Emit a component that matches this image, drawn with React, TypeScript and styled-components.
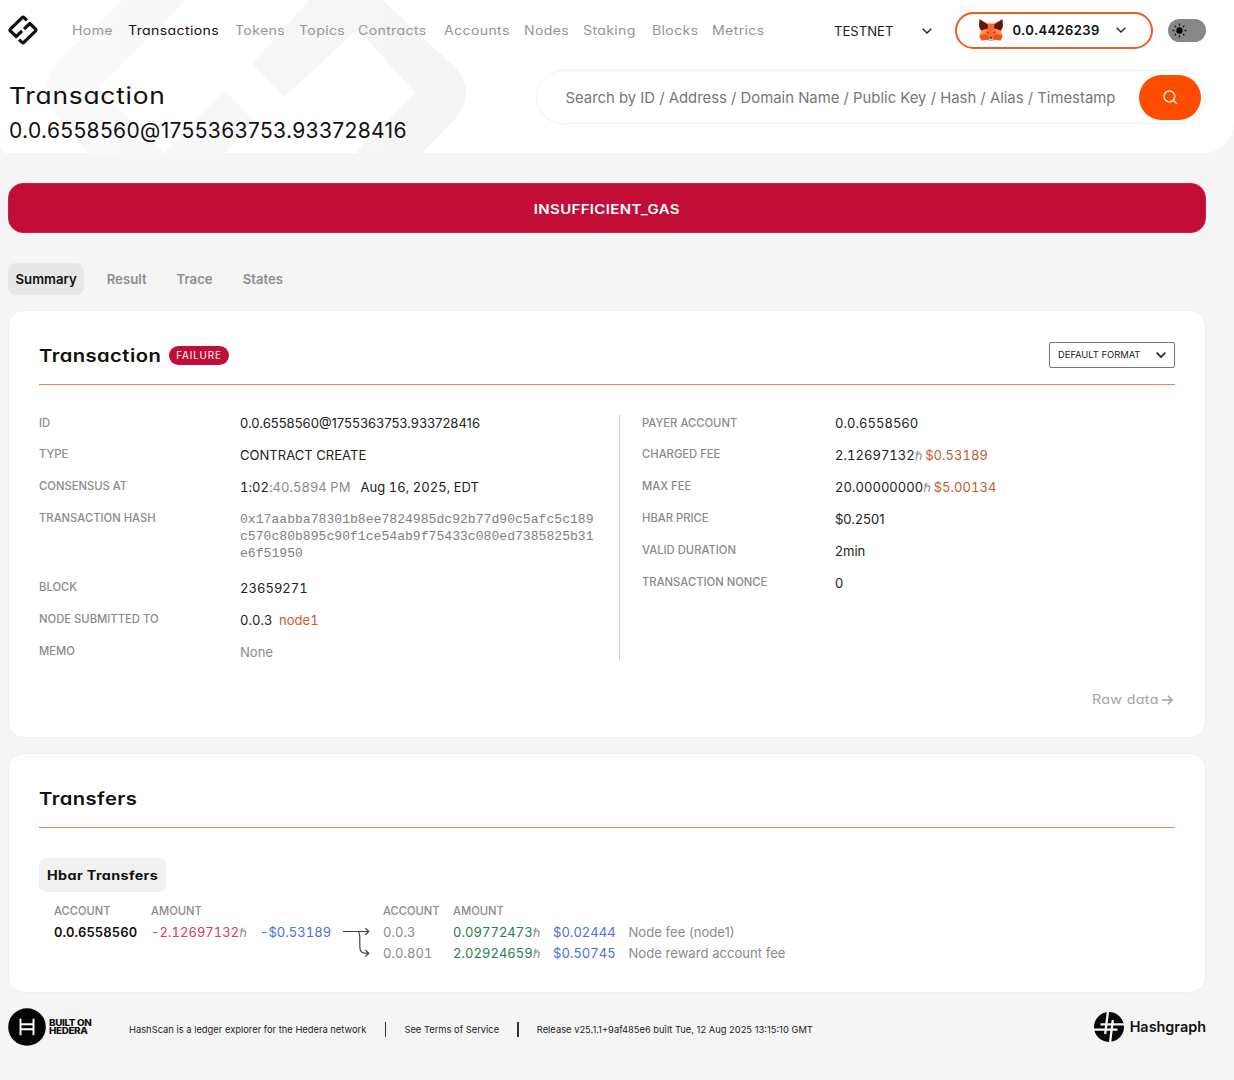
import React from "react";
import styled, { createGlobalStyle } from "styled-components";

const GlobalStyle = createGlobalStyle`
  * { box-sizing: border-box; }
  body {
    margin: 0;
    background: #f5f5f5;
    color: #222;
    font-family: Inter, "Liberation Sans", sans-serif;
    font-size: 13px;
    -webkit-font-smoothing: antialiased;
  }
`;

const brandFont = `
  font-family: Inter, "Liberation Sans", sans-serif;
  font-feature-settings: "cv11", "ss03";
`;

/* The brand face is wide: Inter's letters are stretched from their left edge. */
const wide = (k: number) => `
  transform: scaleX(${k});
  transform-origin: 0 50%;
`;

const Page = styled.div`
  width: 1234px;
  height: 1080px;
  overflow: hidden;
`;

const Header = styled.header`
  position: relative;
  height: 153px;
  overflow: hidden;
  background: #fff;
  border-radius: 0 0 30px 6px;
`;

const Watermark = styled.svg`
  position: absolute;
  inset: 0;
  width: 500px;
  height: 154px;
`;

const TopBar = styled.div`
  position: relative;
  display: flex;
  align-items: center;
  height: 60px;
  padding: 0 28px 0 8px;
`;

const Nav = styled.nav`
  display: flex;
  flex: 1;
  gap: 15.4px;
  margin-left: 34px;
  padding-top: 2px;
`;

const NavLink = styled.a<{ $w: number; $active?: boolean }>`
  ${brandFont}
  ${wide(1.14)}
  width: ${(p) => p.$w}px;
  font-size: 12.4px;
  line-height: 18px;
  letter-spacing: 0.3px;
  white-space: nowrap;
  color: ${(p) => (p.$active ? "#111" : "#959595")};
`;

const Network = styled.div`
  display: flex;
  align-items: center;
  justify-content: space-between;
  width: 98px;
  margin-right: 23px;
  padding-top: 1px;
  font-size: 13.1px;
  color: #222;
`;

const Wallet = styled.div`
  ${brandFont}
  display: flex;
  align-items: center;
  width: 198px;
  height: 37px;
  margin-right: 15px;
  padding: 0 25px 0 22px;
  border: 2px solid #ee5c26;
  border-radius: 19px;
  font-size: 13px;
  font-weight: 600;
  letter-spacing: 0.4px;
  color: #111;
`;

const WalletId = styled.span`
  flex: 1;
  margin-left: 9.5px;
`;

const Toggle = styled.div`
  display: flex;
  align-items: center;
  width: 38px;
  height: 23px;
  padding-left: 4px;
  border-radius: 12px;
  background: #878787;
`;

const HeaderMain = styled.div`
  position: relative;
  display: flex;
  justify-content: space-between;
  padding: 10px 28px 0 9px;
`;

const PageTitle = styled.h1`
  ${brandFont}
  ${wide(1.12)}
  width: 160px;
  margin: 9px 0 0;
  font-size: 23.5px;
  line-height: 34px;
  font-weight: 400;
  letter-spacing: 0.7px;
  color: #111;
`;

const PageSubtitle = styled.div`
  ${brandFont}
  font-size: 21px;
  line-height: 35px;
  letter-spacing: 0.36px;
  color: #111;
`;

const SearchBox = styled.div`
  display: flex;
  align-items: center;
  justify-content: space-between;
  width: 670px;
  height: 54px;
  padding: 0 4px 0 28.5px;
  border: 1px solid #f0f0f0;
  border-radius: 27px;
  background: #fff;
  font-size: 14.87px;
  color: #777;
`;

const SearchHint = styled.span`
  padding-top: 2px;
`;

const SearchButton = styled.button`
  display: flex;
  align-items: center;
  justify-content: center;
  width: 62px;
  height: 45px;
  border: 0;
  border-radius: 22.5px;
  background: #ff4d00;
`;

const Main = styled.main`
  display: flex;
  flex-direction: column;
  padding: 30px 28px 0 8px;
`;

const Alert = styled.div`
  ${brandFont}
  display: flex;
  align-items: center;
  justify-content: center;
  height: 50px;
  border: 1px solid #cf1f49;
  border-radius: 15px;
  background: #c20e37;
  color: #fff;
  font-size: 12.7px;
  font-weight: 600;
  letter-spacing: 0.3px;
  padding-top: 2px;
`;

const AlertText = styled.span`
  transform: scaleX(1.18);
`;

const Tabs = styled.div`
  display: flex;
  gap: 15px;
  margin-top: 30px;
`;

const Tab = styled.div<{ $active?: boolean }>`
  height: 32px;
  padding: 0 7.5px;
  border-radius: 8px;
  background: ${(p) => (p.$active ? "#e8e8e8" : "transparent")};
  color: ${(p) => (p.$active ? "#111" : "#8e8e8e")};
  font-size: 13.2px;
  line-height: 32px;
  font-weight: 600;
`;

const Card = styled.section<{ $h: number; $top: number }>`
  display: flex;
  flex-direction: column;
  height: ${(p) => p.$h}px;
  margin-top: ${(p) => p.$top}px;
  padding: 0 30px;
  border: 1px solid #f0f0f0;
  border-radius: 16px;
  background: #fff;
`;

const CardHeader = styled.div`
  display: flex;
  flex-shrink: 0;
  align-items: center;
  height: 74px;
  padding-top: 17px;
  border-bottom: 1px solid #ee7f5c;
`;

const CardTitle = styled.h2`
  ${brandFont}
  ${wide(1.16)}
  width: 122px;
  margin: 0;
  font-size: 17.4px;
  line-height: 26px;
  font-weight: 600;
  letter-spacing: 0.4px;
  color: #111;
`;

const Badge = styled.span`
  ${brandFont}
  width: 60px;
  height: 19px;
  margin: -1px 0 0 8px;
  border-radius: 10px;
  background: #c20e37;
  color: #fff;
  font-size: 9.8px;
  line-height: 19px;
  text-align: center;
  letter-spacing: 0.9px;
`;

const Select = styled.div`
  display: flex;
  align-items: center;
  justify-content: space-between;
  width: 126px;
  height: 26px;
  margin: -3px 0 0 auto;
  padding: 0 8px 0 8px;
  border: 1px solid #777;
  border-radius: 2px;
  font-size: 9.4px;
  color: #222;
`;

const Details = styled.div`
  display: flex;
  flex-shrink: 0;
  height: 245px;
  margin-top: 30px;
`;

const Column = styled.div<{ $w?: number }>`
  display: flex;
  flex-direction: column;
  width: ${(p) => (p.$w ? `${p.$w}px` : "auto")};
`;

const VerticalRule = styled.div`
  width: 1px;
  margin-right: 22px;
  background: #d2d2d2;
`;

const Property = styled.div<{ $label: number; $tall?: boolean }>`
  display: grid;
  flex-shrink: 0;
  grid-template-columns: ${(p) => p.$label}px auto;
  height: ${(p) => (p.$tall ? 69.2 : 31.9)}px;
`;

const Label = styled.div`
  padding-top: 0.6px;
  font-size: 11.25px;
  line-height: 14px;
  font-weight: 500;
  color: #8b8b8b;
`;

const Value = styled.div<{ $tone?: "muted" }>`
  padding-top: 0.3px;
  font-size: 13.05px;
  line-height: 17px;
  white-space: pre;
  color: ${(p) => (p.$tone ? "#8b8b8b" : "#222")};
`;

const Hash = styled.div`
  width: 360px;
  font-family: "Liberation Mono", monospace;
  font-size: 13.1px;
  line-height: 17px;
  word-break: break-all;
  color: #808080;
`;

type Tone = "dark" | "bold" | "muted" | "orange" | "red" | "green" | "blue";
const tones: Record<Tone, string> = {
  dark: "#222",
  bold: "#111",
  muted: "#8b8b8b",
  orange: "#cb5a30",
  red: "#dc3b5f",
  green: "#258046",
  blue: "#4a70dd",
};

const Num = styled.span<{ $tone?: Tone }>`
  font-size: 13px;
  letter-spacing: 0.04px;
  font-feature-settings: "tnum";
  font-weight: ${(p) => (p.$tone === "bold" ? 600 : 400)};
  color: ${(p) => tones[p.$tone ?? "dark"]};
`;

const DateText = styled(Num)`
  margin-left: 10px;
`;

const NodeName = styled(Num)`
  margin-left: 6.5px;
`;

const HbarSign = styled.span`
  font-family: "DejaVu Sans", sans-serif;
  font-size: 12px;
  line-height: 1;
  letter-spacing: -0.9px;
  color: #888;
`;

const RawData = styled.div`
  display: flex;
  align-items: center;
  align-self: flex-end;
  gap: 3px;
  margin-top: 30px;
  padding-right: 2px;
  color: #a3a3a3;
`;

const RawDataText = styled.span`
  ${brandFont}
  ${wide(1.14)}
  width: 67px;
  font-size: 12.5px;
  line-height: 20px;
  letter-spacing: 0.3px;
  white-space: nowrap;
`;

const Chip = styled.div`
  align-self: flex-start;
  width: 127px;
  height: 34px;
  margin-top: 30px;
  padding-left: 8px;
  border-radius: 7px;
  background: #f1f1f1;
`;

const ChipText = styled.div`
  ${brandFont}
  ${wide(1.15)}
  font-size: 12.5px;
  line-height: 36px;
  font-weight: 700;
  letter-spacing: 0.3px;
  white-space: nowrap;
  color: #111;
`;

const TransferTable = styled.div`
  display: grid;
  grid-template-columns: 97px 109px 83px 40px 70px 100px 75.5px auto;
  grid-template-rows: 21px 21.5px 21.5px;
  align-items: center;
  margin: 8px 0 0 15px;
  font-size: 13.1px;
  white-space: nowrap;
  color: #8b8b8b;
`;

const ColumnHead = styled.div<{ $col: number }>`
  grid-row: 1;
  grid-column: ${(p) => p.$col};
  padding-top: 1px;
  font-size: 11.2px;
  font-weight: 500;
`;

const Cell = styled.div<{ $row: number; $col: number }>`
  grid-row: ${(p) => p.$row};
  grid-column: ${(p) => p.$col};
`;

const ArrowCell = styled.div`
  grid-row: 2 / 4;
  grid-column: 4;
  height: 43px;
`;

const Footer = styled.footer`
  display: flex;
  align-items: center;
  height: 38px;
  margin-top: 15px;
  font-size: 9.36px;
  color: #222;
`;

const BuiltOn = styled.div`
  ${wide(1.13)}
  width: 80px;
  margin-left: 3px;
  font-size: 8.7px;
  line-height: 8px;
  font-weight: 800;
  letter-spacing: -0.3px;
  color: #111;
`;

const BuiltOnLine = styled.div`
  height: 8px;
`;

const FooterText = styled.span<{ $w: number }>`
  width: ${(p) => p.$w}px;
  padding-top: 5px;
  white-space: nowrap;
`;

const FooterRule = styled.span`
  width: 1.4px;
  height: 15px;
  margin: 5px 18px 0;
  background: #333;
`;

const Hashgraph = styled.div`
  display: flex;
  align-items: center;
  gap: 6px;
  margin-left: auto;
  font-size: 14.4px;
  font-weight: 600;
  color: #111;
`;

const HashgraphName = styled.span`
  margin-top: -2px;
`;

const LogoMark = () => (
  <svg width="30" height="30" viewBox="0 0 30 30" fill="none" stroke="#111" strokeWidth="3.2" strokeLinejoin="round">
    <path d="M18.9 5.3 16.3 2.8Q15.1 1.6 13.9 2.8L2.6 13.8Q1.4 15 2.6 16.2L8.2 21.5 14 15.9" />
    <path d="M11.1 24.7 13.7 27.2Q14.9 28.4 16.1 27.2L27.4 16.2Q28.6 15 27.4 13.8L21.8 8.5 16 14.1" />
  </svg>
);

const WatermarkMark = () => (
  <Watermark viewBox="0 0 500 154">
    <defs>
      <linearGradient id="mark-fade" x1="50" x2="466" y1="0" y2="0" gradientUnits="userSpaceOnUse">
        <stop offset="0" stopColor="#fafafa" />
        <stop offset="1" stopColor="#f4f4f4" />
      </linearGradient>
    </defs>
    <g fill="url(#mark-fade)">
      <path d="M126 -3 59 60Q36 85 56 115L89 154H163L225 91L253 120L224 154H165L98 88L188 -3Z" />
      <path d="M312 -3 252 64 284 97 358 29 415 93 355 154H421L455 119Q477 94 455 67L379 -3Z" />
    </g>
  </Watermark>
);

const Chevron = ({ size = 10, weight = 1.4 }: { size?: number; weight?: number }) => (
  <svg width={size} height={size * 0.6} viewBox="0 0 10 6" fill="none" stroke="#222" strokeWidth={weight}>
    <path d="M.7.7 5 5 9.3.7" />
  </svg>
);

const Fox = () => (
  <svg width="24" height="22" viewBox="0 0 24 22">
    <path fill="#ff6a2c" d="M.6.3 8.8 4.6H15.2L23.4.3 24 8 21.8 13 23.5 18 21.5 21.5 16 20 14 21.8H10L8 20 2.5 21.5.5 18 2.2 13 0 8Z" />
    <path fill="#5c1a05" d="M.6.3 8.6 5.4 9 9.4 2.2 11.4.2 7ZM23.4.3 15.4 5.4 15 9.4 21.8 11.4 23.8 7Z" />
    <path fill="#ff8d5d" d="M9 9.4 6.2 15.2.5 16.2 2.3 11.4ZM15 9.4 17.8 15.2 23.5 16.2 21.7 11.4Z" />
    <path fill="#f0541a" d="M6.2 15.2 10.3 17.2 10 20.5 2.5 21.5.5 16.2ZM17.8 15.2 13.7 17.2 14 20.5 21.5 21.5 23.5 16.2Z" />
    <path fill="#7d2a0c" d="M7.2 12.4 9.8 13.4 9.2 14.5ZM16.8 12.4 14.2 13.4 14.8 14.5Z" />
    <path fill="#c9c4cc" d="M10.3 18H13.7L14.2 21.5H9.8Z" />
    <path fill="#3a2420" d="M10.9 18H13.1L13.4 19.6H10.6Z" />
  </svg>
);

const Sun = () => (
  <svg width="15" height="15" viewBox="0 0 15 15">
    <circle cx="7.5" cy="7.5" r="3.2" fill="#000" />
    <g stroke="#111" strokeWidth="1.3">
      <path d="M7.5 .5V2.5M7.5 12.5V14.5M.5 7.5H2.5M12.5 7.5H14.5M2.6 2.6 4 4M11 11 12.4 12.4M2.6 12.4 4 11M11 4 12.4 2.6" />
    </g>
  </svg>
);

const SearchGlyph = () => (
  <svg width="16" height="16" viewBox="0 0 16 16" fill="none" stroke="#fff" strokeWidth="1.3" strokeLinecap="round">
    <circle cx="7.4" cy="7.4" r="5.4" />
    <path d="M11.4 11.4 14.6 14.6" />
  </svg>
);

const TransferArrow = () => (
  <svg width="28" height="43" viewBox="0 0 28 43" fill="none" stroke="#444" strokeWidth="1.2">
    <path d="M0 10.5H25.5M22.3 7.2 25.8 10.5 22.3 13.8" />
    <path d="M15.3 10.5Q16.8 12.5 16.8 16.5V25.5Q16.8 32.2 22 32.2H25.5M22.3 28.9 25.8 32.2 22.3 35.5" />
  </svg>
);

const HederaMark = () => (
  <svg width="38" height="38" viewBox="0 0 38 38">
    <circle cx="19" cy="19" r="18.8" fill="#050505" />
    <path d="M12.5 10.8V27.2M25.5 10.8V27.2M12.5 16.3H25.5M12.5 21.3H25.5" fill="none" stroke="#fff" strokeWidth="1.9" />
  </svg>
);

const HashgraphMark = () => (
  <svg width="30" height="30" viewBox="0 0 30 30">
    <circle cx="15" cy="15" r="15" fill="#080808" />
    <g fill="none" stroke="#f5f5f5" strokeWidth="2.3">
      <path d="M14 -1 11.2 22M16 31 18.8 8M31 12.4H6.5M-1 17.6H23.5" />
    </g>
  </svg>
);

const navItems = [
  { label: "Home", w: 41 },
  { label: "Transactions", w: 91 },
  { label: "Tokens", w: 48.5 },
  { label: "Topics", w: 44 },
  { label: "Contracts", w: 71 },
  { label: "Accounts", w: 64.5 },
  { label: "Nodes", w: 43.5 },
  { label: "Staking", w: 53.5 },
  { label: "Blocks", w: 44.5 },
  { label: "Metrics", w: 54 },
];

const Amount = ({ value, tone }: { value: string; tone?: Tone }) => (
  <>
    <Num $tone={tone}>{value}</Num>
    <HbarSign>ℏ</HbarSign>
  </>
);

export default function App() {
  return (
    <Page>
      <GlobalStyle />
      <Header>
        <WatermarkMark />
        <TopBar>
          <LogoMark />
          <Nav>
            {navItems.map((n) => (
              <NavLink key={n.label} $w={n.w} $active={n.label === "Transactions"}>
                {n.label}
              </NavLink>
            ))}
          </Nav>
          <Network>
            TESTNET
            <Chevron />
          </Network>
          <Wallet>
            <Fox />
            <WalletId>0.0.4426239</WalletId>
            <Chevron />
          </Wallet>
          <Toggle>
            <Sun />
          </Toggle>
        </TopBar>
        <HeaderMain>
          <div>
            <PageTitle>Transaction</PageTitle>
            <PageSubtitle>0.0.6558560@1755363753.933728416</PageSubtitle>
          </div>
          <SearchBox>
            <SearchHint>
              Search by ID / Address / Domain Name / Public Key / Hash / Alias / Timestamp
            </SearchHint>
            <SearchButton>
              <SearchGlyph />
            </SearchButton>
          </SearchBox>
        </HeaderMain>
      </Header>

      <Main>
        <Alert>
          <AlertText>INSUFFICIENT_GAS</AlertText>
        </Alert>
        <Tabs>
          <Tab $active>Summary</Tab>
          <Tab>Result</Tab>
          <Tab>Trace</Tab>
          <Tab>States</Tab>
        </Tabs>

        <Card $h={428} $top={15}>
          <CardHeader>
            <CardTitle>Transaction</CardTitle>
            <Badge>FAILURE</Badge>
            <Select>
              DEFAULT FORMAT
              <Chevron weight={1.7} />
            </Select>
          </CardHeader>
          <Details>
            <Column $w={580}>
              <Property $label={201}>
                <Label>ID</Label>
                <Value>0.0.6558560@1755363753.933728416</Value>
              </Property>
              <Property $label={201}>
                <Label>TYPE</Label>
                <Value>CONTRACT CREATE</Value>
              </Property>
              <Property $label={201}>
                <Label>CONSENSUS AT</Label>
                <Value>
                  <Num>1:02</Num>
                  <Num $tone="muted">:40.5894 PM</Num>
                  <DateText>Aug 16, 2025, EDT</DateText>
                </Value>
              </Property>
              <Property $label={201} $tall>
                <Label>TRANSACTION HASH</Label>
                <Hash>0x17aabba78301b8ee7824985dc92b77d90c5afc5c189c570c80b895c90f1ce54ab9f75433c080ed7385825b31e6f51950</Hash>
              </Property>
              <Property $label={201}>
                <Label>BLOCK</Label>
                <Value><Num>23659271</Num></Value>
              </Property>
              <Property $label={201}>
                <Label>NODE SUBMITTED TO</Label>
                <Value>
                  <Num>0.0.3</Num>
                  <NodeName $tone="orange">node1</NodeName>
                </Value>
              </Property>
              <Property $label={201}>
                <Label>MEMO</Label>
                <Value $tone="muted">None</Value>
              </Property>
            </Column>
            <VerticalRule />
            <Column>
              <Property $label={193}>
                <Label>PAYER ACCOUNT</Label>
                <Value><Num>0.0.6558560</Num></Value>
              </Property>
              <Property $label={193}>
                <Label>CHARGED FEE</Label>
                <Value>
                  <Amount value="2.12697132" /> <Num $tone="orange">$0.53189</Num>
                </Value>
              </Property>
              <Property $label={193}>
                <Label>MAX FEE</Label>
                <Value>
                  <Amount value="20.00000000" /> <Num $tone="orange">$5.00134</Num>
                </Value>
              </Property>
              <Property $label={193}>
                <Label>HBAR PRICE</Label>
                <Value>$0.2501</Value>
              </Property>
              <Property $label={193}>
                <Label>VALID DURATION</Label>
                <Value>2min</Value>
              </Property>
              <Property $label={193}>
                <Label>TRANSACTION NONCE</Label>
                <Value>0</Value>
              </Property>
            </Column>
          </Details>
          <RawData>
            <RawDataText>Raw data</RawDataText>
            <svg width="11" height="10" viewBox="0 0 11 10" fill="none" stroke="#a3a3a3" strokeWidth="1.5">
              <path d="M0 5H10M5.8.7 10.1 5 5.8 9.3" />
            </svg>
          </RawData>
        </Card>

        <Card $h={240} $top={15}>
          <CardHeader>
            <CardTitle>Transfers</CardTitle>
          </CardHeader>
          <Chip>
            <ChipText>Hbar Transfers</ChipText>
          </Chip>
          <TransferTable>
            <ColumnHead $col={1}>ACCOUNT</ColumnHead>
            <ColumnHead $col={2}>AMOUNT</ColumnHead>
            <ColumnHead $col={5}>ACCOUNT</ColumnHead>
            <ColumnHead $col={6}>AMOUNT</ColumnHead>
            <Cell $row={2} $col={1}><Num $tone="bold">0.0.6558560</Num></Cell>
            <Cell $row={2} $col={2}><Amount value="-2.12697132" tone="red" /></Cell>
            <Cell $row={2} $col={3}><Num $tone="blue">-$0.53189</Num></Cell>
            <ArrowCell><TransferArrow /></ArrowCell>
            <Cell $row={2} $col={5}><Num $tone="muted">0.0.3</Num></Cell>
            <Cell $row={2} $col={6}><Amount value="0.09772473" tone="green" /></Cell>
            <Cell $row={2} $col={7}><Num $tone="blue">$0.02444</Num></Cell>
            <Cell $row={2} $col={8}>Node fee (node1)</Cell>
            <Cell $row={3} $col={5}><Num $tone="muted">0.0.801</Num></Cell>
            <Cell $row={3} $col={6}><Amount value="2.02924659" tone="green" /></Cell>
            <Cell $row={3} $col={7}><Num $tone="blue">$0.50745</Num></Cell>
            <Cell $row={3} $col={8}>Node reward account fee</Cell>
          </TransferTable>
        </Card>

        <Footer>
          <HederaMark />
          <BuiltOn>
            <BuiltOnLine>BUILT ON</BuiltOnLine>
            <BuiltOnLine>HEDERA</BuiltOnLine>
          </BuiltOn>
          <FooterText $w={238}>HashScan is a ledger explorer for the Hedera network</FooterText>
          <FooterRule />
          <FooterText $w={95}>See Terms of Service</FooterText>
          <FooterRule />
          <FooterText $w={276}>Release v25.1.1+9af485e6 built Tue, 12 Aug 2025 13:15:10 GMT</FooterText>
          <Hashgraph>
            <HashgraphMark />
            <HashgraphName>Hashgraph</HashgraphName>
          </Hashgraph>
        </Footer>
      </Main>
    </Page>
  );
}
